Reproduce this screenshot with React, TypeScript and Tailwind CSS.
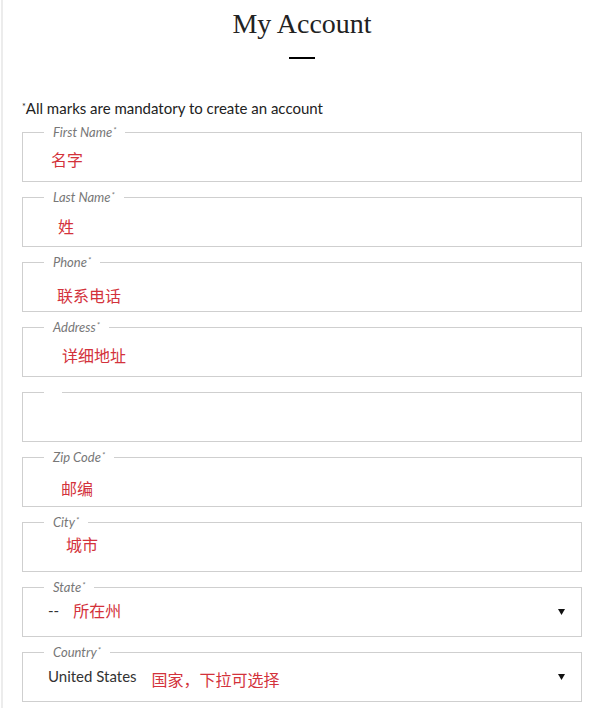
import React from 'react';

type Field = {
  label: string;
  hint?: string;
  lead?: string;
  hintClass: string;
  select?: boolean;
};

const fields: Field[] = [
  { label: 'First Name', hint: '名字', hintClass: 'ml-[28px] mt-[2px]' },
  { label: 'Last Name', hint: '姓', hintClass: 'ml-[35px] mt-[4px]' },
  { label: 'Phone', hint: '联系电话', hintClass: 'ml-[34px] mt-[8px]' },
  { label: 'Address', hint: '详细地址', hintClass: 'ml-[39px] mt-[3px]' },
  { label: '', hintClass: '' },
  { label: 'Zip Code', hint: '邮编', hintClass: 'ml-[38px] mt-[6px]' },
  { label: 'City', hint: '城市', hintClass: 'ml-[43px] mt-[-3px]' },
  { label: 'State', lead: '--', hint: '所在州', hintClass: 'ml-[25px] mt-[-2px]', select: true },
  { label: 'Country', lead: 'United States', hint: '国家，下拉可选择', hintClass: 'ml-[25px] mt-[2px]', select: true },
];

const Arrow = () => (
  <svg width="7" height="6" viewBox="0 0 7 6" className="absolute right-[16px] top-[21px]">
    <path d="M0 0 H7 L3.5 6 Z" fill="#111" />
  </svg>
);

const Box: React.FC<{ field: Field }> = ({ field }) => (
  <div className="relative h-[50px] w-[560px] border border-[#cfcfcf]">
    <span className="absolute left-[21px] top-[-9px] h-[16px] bg-white px-[9px] text-[13px] italic leading-[16px] text-[#777] font-['Lato',sans-serif]">
      {field.label}
      {field.label && <sup className="ml-[1px] text-[8px]">*</sup>}
    </span>
    <div className={`flex h-full items-center ${field.hintClass}`}>
      {field.lead && (
        <span
          className={`text-[15px] text-[#333] font-['Lato',sans-serif] ${
            field.label === 'State' ? 'mr-[14px]' : 'mr-[15px] -mt-[6px]'
          }`}
        >
          {field.lead}
        </span>
      )}
      {field.hint && (
        <span className="text-[16px] text-[#d3323b] font-['Noto_Sans_CJK_SC',sans-serif]">{field.hint}</span>
      )}
    </div>
    {field.select && <Arrow />}
  </div>
);

export default function App() {
  return (
    <div className="min-h-[708px] bg-white pl-[1px]">
      <div className="min-h-[708px] border-l-2 border-[#ececec] pl-[19px] pr-[18px]">
        <div className="flex flex-col items-center pt-[4px]">
          <h1 className="text-[28px] leading-[40px] text-[#222] font-['Liberation_Serif',serif]">My Account</h1>
          <div className="mt-[13px] h-[2px] w-[26px] bg-black" />
        </div>
        <p className="mt-[39px] text-[15px] leading-[20px] text-[#222] font-['Lato',sans-serif]">
          <sup className="text-[9px]">*</sup>All marks are mandatory to create an account
        </p>
        <div className="mt-[14px] flex flex-col gap-[15px]">
          {fields.map((f, i) => (
            <Box key={i} field={f} />
          ))}
        </div>
      </div>
    </div>
  );
}
